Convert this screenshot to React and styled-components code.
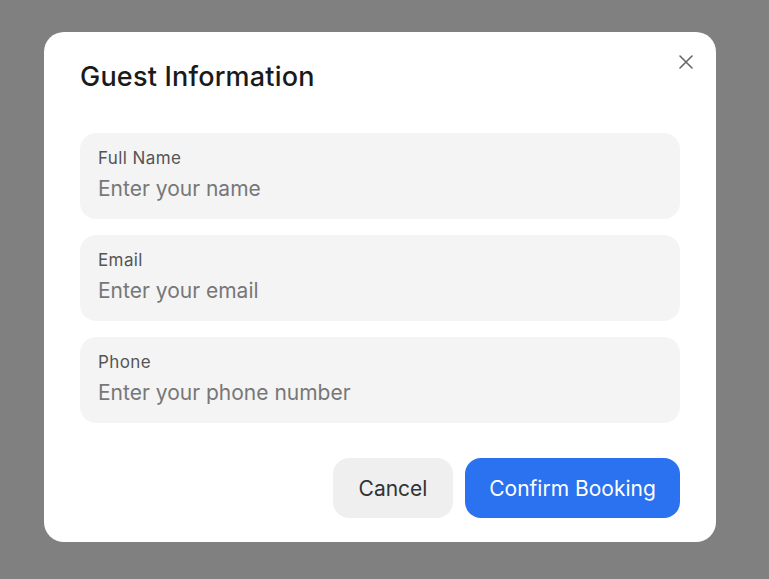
import React, { useState } from "react";
import styled, { createGlobalStyle } from "styled-components";

const GlobalStyle = createGlobalStyle`
  html, body {
    margin: 0;
    padding: 0;
    height: 100%;
  }
  body {
    font-family: Inter, "Noto Sans", "Liberation Sans", sans-serif;
    background: #808080;
  }
  * { box-sizing: border-box; }
`;

const Overlay = styled.div`
  width: 100vw;
  height: 100vh;
  background: #808080;
  display: flex;
  align-items: flex-start;
  justify-content: flex-start;
  padding: 32px 0 0 44px;
`;

const Modal = styled.div`
  position: relative;
  width: 672px;
  height: 510px;
  background: #fff;
  border-radius: 20px;
  padding: 31px 36px 24px;
  display: flex;
  flex-direction: column;
`;

const Title = styled.h2`
  margin: 0 0 42px;
  font-size: 27px;
  line-height: 28px;
  font-weight: 500;
  letter-spacing: 0.2px;
  color: #1a1a1a;
`;

const CloseButton = styled.button`
  position: absolute;
  top: 18px;
  right: 18px;
  width: 24px;
  height: 24px;
  padding: 0;
  border: none;
  background: none;
  display: flex;
  align-items: center;
  justify-content: center;
  color: #666;
  cursor: pointer;
`;

const Fields = styled.div`
  display: flex;
  flex-direction: column;
  gap: 16px;
`;

const Field = styled.label`
  display: flex;
  flex-direction: column;
  height: 86px;
  padding: 14px 18px 0;
  background: #f4f4f4;
  border-radius: 16px;
`;

const Label = styled.span`
  font-size: 17px;
  line-height: 22px;
  letter-spacing: 0.4px;
  color: #555;
`;

const Input = styled.input`
  margin-top: 7px;
  border: none;
  outline: none;
  background: transparent;
  padding: 0;
  font-family: inherit;
  font-size: 21px;
  line-height: 26px;
  color: #333;
  &::placeholder {
    color: #777;
  }
`;

const Actions = styled.div`
  margin-top: 35px;
  display: flex;
  justify-content: flex-end;
  gap: 12px;
`;

const Button = styled.button`
  height: 60px;
  width: ${(p) => (p.$primary ? "215px" : "120px")};
  padding: 0;
  border: none;
  border-radius: 16px;
  font-family: inherit;
  font-size: 21px;
  background: ${(p) => (p.$primary ? "#2a72f0" : "#efefef")};
  color: ${(p) => (p.$primary ? "#fff" : "#333")};
  cursor: pointer;
`;

const fields = [
  { key: "name", label: "Full Name", placeholder: "Enter your name", type: "text" },
  { key: "email", label: "Email", placeholder: "Enter your email", type: "email" },
  { key: "phone", label: "Phone", placeholder: "Enter your phone number", type: "tel" },
];

export default function App() {
  const [values, setValues] = useState({ name: "", email: "", phone: "" });

  return (
    <>
      <GlobalStyle />
      <Overlay>
        <Modal>
          <CloseButton aria-label="Close">
            <svg width="16" height="16" viewBox="0 0 16 16" fill="none" stroke="currentColor" strokeWidth="1.6" strokeLinecap="round">
              <path d="M2 2L14 14M14 2L2 14" />
            </svg>
          </CloseButton>
          <Title>Guest Information</Title>
          <Fields>
            {fields.map((f) => (
              <Field key={f.key}>
                <Label>{f.label}</Label>
                <Input
                  type={f.type}
                  placeholder={f.placeholder}
                  value={values[f.key]}
                  onChange={(e) => setValues({ ...values, [f.key]: e.target.value })}
                />
              </Field>
            ))}
          </Fields>
          <Actions>
            <Button>Cancel</Button>
            <Button $primary>Confirm Booking</Button>
          </Actions>
        </Modal>
      </Overlay>
    </>
  );
}
